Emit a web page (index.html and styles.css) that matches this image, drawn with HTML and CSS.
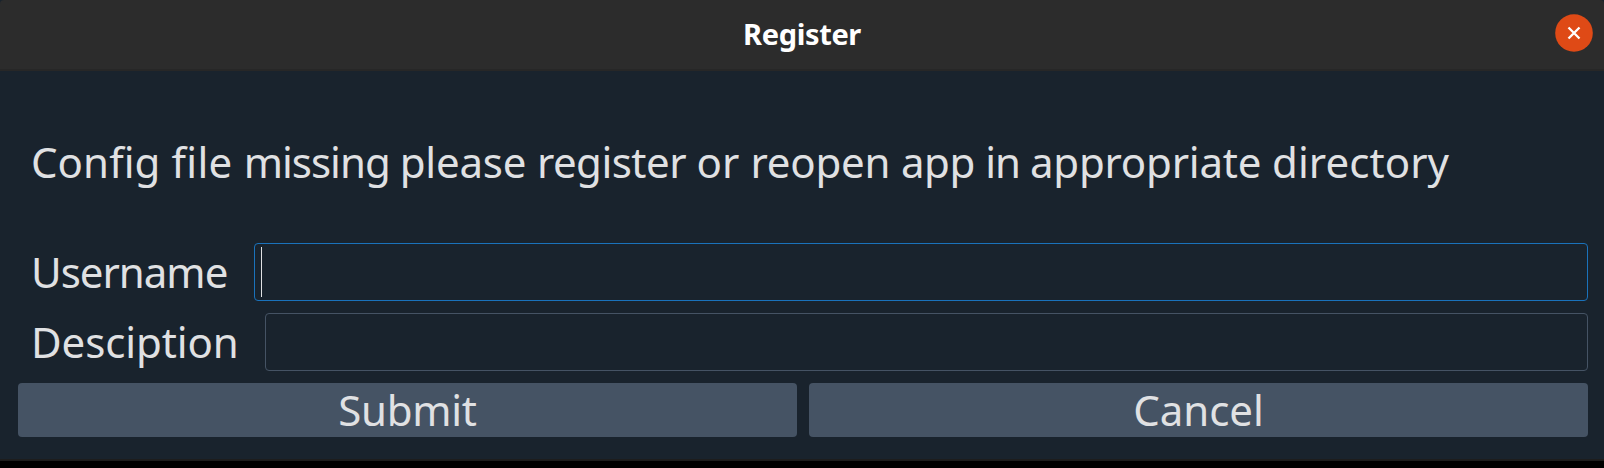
FILE: index.html
```html
<!DOCTYPE html>
<html lang="en">
<head>
<meta charset="utf-8">
<title>Register</title>
<link rel="stylesheet" href="styles.css">
</head>
<body>
<div class="window">
  <header class="titlebar">
    <h1 class="title">Register</h1>
    <button class="close" aria-label="Close">
      <svg width="38" height="38" viewBox="0 0 38 38"><circle cx="19" cy="19" r="18.8" fill="#df4a16"/><path d="M13.5 13.5 24.5 24.5M24.5 13.5 13.5 24.5" stroke="#fff" stroke-width="2.3"/></svg>
    </button>
  </header>
  <main class="content">
    <p class="message"><span class="loose">Config </span><span class="looser">file </span><span class="tight">missing </span><span class="snug">please </span>register <span class="loose">or </span><span class="snug">reopen </span>app <span class="tight">in </span><span class="snug">appropriate </span><span class="loose">directory</span></p>
    <div class="row">
      <span class="label username">Username</span>
      <div class="field focused"><span class="caret"></span></div>
    </div>
    <div class="row">
      <span class="label description">Desciption</span>
      <div class="field"></div>
    </div>
    <div class="buttons">
      <button class="button submit">Submit</button>
      <button class="button">Cancel</button>
    </div>
  </main>
</div>
</body>
</html>
```
FILE: styles.css
```css
* { box-sizing: border-box; }
body { margin: 0; background: #000; font-family: "Noto Sans", sans-serif; color: #e0e1e3; }
.window { height: 461px; display: flex; flex-direction: column; background: #19232d; border-bottom: 2px solid #1d1d1d; }
.titlebar { height: 71px; display: grid; grid-template-columns: 1fr auto 1fr; background: #2c2c2c; border-bottom: 2px solid #272727; border-radius: 4px 4px 0 0; padding-right: 11px; }
.title { grid-column: 2; margin: 0; padding-left: 11px; font-size: 29px; line-height: 67px; font-weight: 700; color: #fff; letter-spacing: -0.35px; }
.close { justify-self: end; margin: 14px 0 0; padding: 0; border: 0; background: none; width: 38px; height: 38px; }
.close svg { display: block; }
.content { flex: 1; display: flex; flex-direction: column; gap: 12px; padding: 83px 16px 22px 18px; font-size: 42px; }
.message { margin: 0; height: 77px; padding-left: 13px; line-height: 16px; white-space: nowrap; letter-spacing: -0.5px; }
.loose { letter-spacing: 0.08px; }
.looser { letter-spacing: 0.3px; }
.snug { letter-spacing: -0.2px; }
.tight { letter-spacing: -1px; }
.row { display: flex; height: 58px; }
.label { flex: none; padding-left: 13px; line-height: 58px; white-space: nowrap; }
.username { width: 236px; letter-spacing: -1px; }
.description { width: 247px; letter-spacing: -0.1px; }
.field { flex: 1; border: 1px solid #455364; border-radius: 4px; padding: 3px 6px; }
.focused { border-color: #1a72bb; }
.caret { display: block; width: 1px; height: 50px; background: #e0e1e3; }
.buttons { display: grid; grid-template-columns: 1fr 1fr; gap: 12px; height: 54px; }
.button { border: 0; border-radius: 4px; padding: 0; background: #455364; color: #e0e1e3; font: inherit; line-height: 54px; }
.submit { letter-spacing: -0.3px; }
```
